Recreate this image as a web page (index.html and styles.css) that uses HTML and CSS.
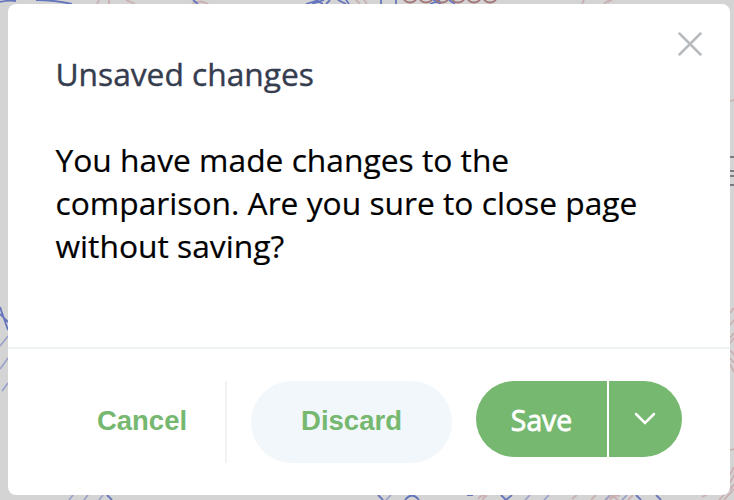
FILE: index.html
```html
<!DOCTYPE html>
<html lang="en">
<head>
<meta charset="utf-8">
<title>Unsaved changes</title>
<link rel="stylesheet" href="styles.css">
</head>
<body>
<svg class="backdrop" width="734" height="500" viewBox="0 0 734 500" fill="none" aria-hidden="true">
  <g stroke="#cbb0b1" stroke-width="1.8">
    <path d="M99 0l-2 4M109 0v4M126 0l9 4M192 4q7-5 16 0M356 0l4 4M364 0l3 4M604 4l5-4M608 2l4-2M582 4l2-4"/>
    <path d="M730 101l4-1M730 313l4-5M730 325l4-5M730 338l4-5M730 343l4-5M730 350l4 5M730 358l4 5M730 364l4 8M730 450l4-1M730 475l4-8M730 483l4-8M730 490l4-6M702 497l6-3M719 500l13-14M724 500l10-11"/>
    <path d="M478 499q4-5 8-3l-4 4M572 499l5-4M591 500l5-5M606 500l6-5M610 500q4-6 10-4M612 495l6 5M628 500l5-5"/>
  </g>
  <g stroke="#6676bd" stroke-width="1.8">
    <path d="M0 2Q8 0 16 1M36 0Q55 0 72 4M193 0l5 4M306 4l13-4M312 4l12-4M316 0l7 4M330 0l-4 4M338 0l8 4M346 0l3 4M381 0v4M396 0v4M430 4l10-4M433 0l8 4M449 0l6 4"/>
    <path d="M0 307l8 23M0 314l8 8M107 495l5 5M378 495l5 5M405 500q7-9 14 0M467 495h6M501 495l5 5 6-5M636 495l5 5M656 495l5 5"/>
  </g>
  <path stroke="#98a0c9" stroke-width="1.6" d="M0 346l8-10M0 369l8-11M2 391l6-8M73 495l-4 5M88 495l-4 5M103 495l-4 5M386 500l5-5M525 500l5-5M544 500l5-5M605 500l5-5M622 500l5-5"/>
  <path stroke="#a37779" stroke-width="1.8" d="M404 0q6 5 12 0M420 0q6 5 12 0M436 0q6 5 12 0M452 0q6 5 12 0M468 0q6 5 12 0M484 0q6 5 12 0"/>
  <path stroke="#7a7b81" stroke-width="2" d="M730 157h4M730 171h4M730 176h4M730 185h4"/>
</svg>
<main class="dialog" role="dialog" aria-labelledby="dialog-title">
  <section class="content">
    <header class="header">
      <h1 class="title" id="dialog-title">Unsaved changes</h1>
      <button class="close" aria-label="Close">
        <svg width="24" height="24" viewBox="0 0 24 24" fill="none" stroke="#b7bbbd" stroke-width="2.5" stroke-linecap="round"><path d="M1.5 1.5l21 21M22.5 1.5l-21 21"/></svg>
      </button>
    </header>
    <p class="message">You have made changes to the comparison. Are you sure to close page without saving?</p>
  </section>
  <footer class="footer">
    <button class="cancel">Cancel</button>
    <button class="discard">Discard</button>
    <div class="split">
      <button class="save">Save</button>
      <button class="more" aria-label="More save options">
        <svg width="22" height="14" viewBox="0 0 22 14" fill="none" stroke="#fff" stroke-width="2.5" stroke-linecap="round"><path d="M2 2l9 9 9-9"/></svg>
      </button>
    </div>
  </footer>
</main>
</body>
</html>
```
FILE: styles.css
```css
* { box-sizing: border-box; }
body {
  margin: 0;
  height: 500px;
  padding: 3.5px 4px 5px 8px;
  overflow: hidden;
  background: #d4d4d4;
  font-family: "Open Sans", sans-serif;
}
.backdrop { position: absolute; inset: 0; }
button { padding: 0; border: 0; background: none; }
.dialog {
  position: relative;
  display: flex;
  flex-direction: column;
  width: 722px;
  height: 491.5px;
  border-radius: 8px;
  background: #fff;
}
.content { height: 345.5px; padding: 27.5px 28px 0 47.5px; border-bottom: 2px solid #f0f3f4; }
.header { display: flex; justify-content: space-between; align-items: flex-start; height: 107px; }
.title {
  margin: 21px 0 0;
  font-size: 31.75px;
  line-height: 43px;
  font-weight: 400;
  letter-spacing: -0.03px;
  color: #353d4f;
  -webkit-text-stroke: 0.4px #353d4f;
}
.close { display: flex; margin-top: 1px; }
.message {
  width: 620px;
  margin: 0;
  font-size: 31.75px;
  line-height: 43px;
  color: #000;
  -webkit-text-stroke: 0.2px #000;
}
.footer { display: flex; align-items: flex-start; padding-top: 32px; }
button.cancel, button.discard {
  height: 82px;
  padding-bottom: 2px;
  font: bold 27.5px/80px "Liberation Sans", sans-serif;
  color: #76b86f;
}
.cancel { width: 219px; padding-left: 51px; border-right: 2px solid #f0f2f3; }
.discard { width: 201px; margin-left: 24px; border-radius: 41px; background: #f1f7fa; }
.split { display: flex; gap: 2px; width: 206px; height: 76px; margin-left: 24px; }
.split button { display: flex; align-items: center; justify-content: center; background: #76b86f; }
.split .save {
  width: 131px;
  padding-top: 2px;
  border-radius: 38px 0 0 38px;
  font: 400 28.3px "Open Sans", sans-serif;
  color: #fff;
  -webkit-text-stroke: 0.8px #fff;
}
.split .more { width: 73px; padding-right: 2px; border-radius: 0 38px 38px 0; }
```
